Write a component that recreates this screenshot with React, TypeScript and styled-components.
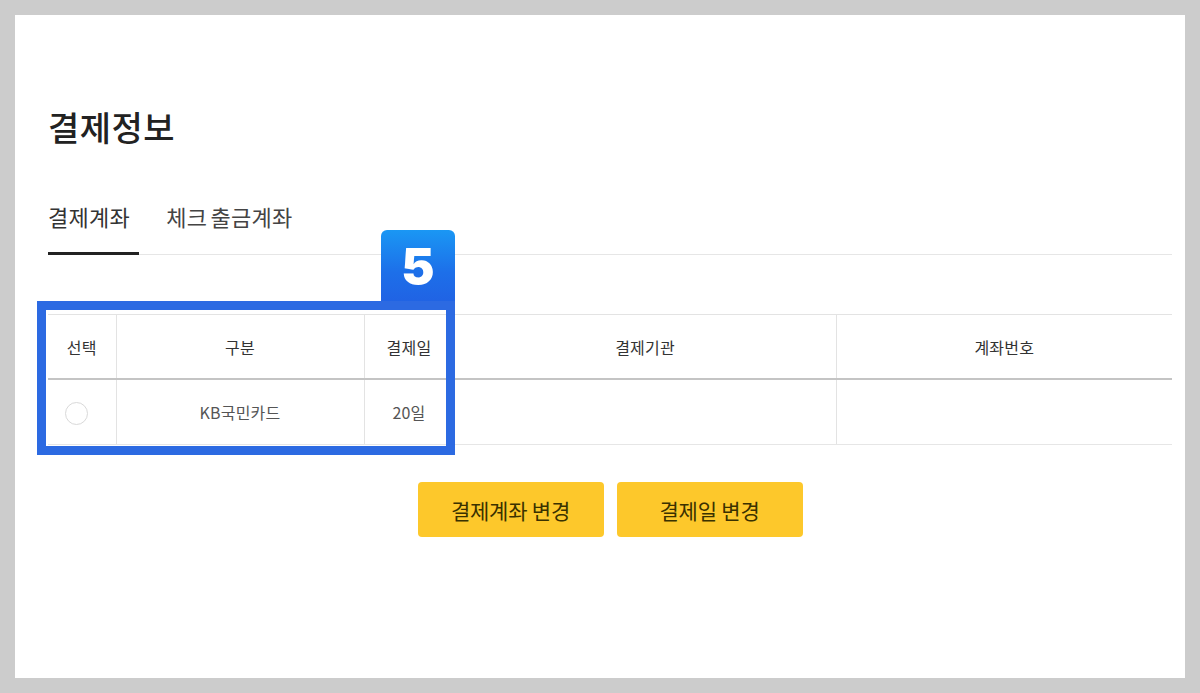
import React from 'react';
import styled, { createGlobalStyle } from 'styled-components';

const GlobalStyle = createGlobalStyle`
  html, body {
    margin: 0;
    padding: 0;
    background: #cccccc;
  }
  body {
    font-family: 'Noto Sans CJK KR', 'Noto Sans', sans-serif;
    color: #222;
  }
`;

// 결제정보 화면
const columns = [
  { key: 'select', label: '선택', width: 68 },
  { key: 'type', label: '구분', width: 248 },
  { key: 'day', label: '결제일', width: 90 },
  { key: 'org', label: '결제기관', width: 382 },
  { key: 'account', label: '계좌번호', width: 336 },
];

const rows = [{ id: 1, type: 'KB국민카드', day: '20일', org: '', account: '' }];

const Frame = styled.div`
  box-sizing: border-box;
  width: 1200px;
  height: 693px;
  padding: 15px;
  background: #cccccc;
`;

const Panel = styled.main`
  box-sizing: border-box;
  height: 100%;
  background: #ffffff;
  padding: 90px 13px 0 33px;
  display: flex;
  flex-direction: column;
`;

const Title = styled.h1`
  margin: 0;
  font-size: 34px;
  line-height: 44px;
  font-weight: 500;
  letter-spacing: 0.5px;
  color: #222;
`;

const TabBar = styled.ul`
  list-style: none;
  margin: 55px 0 0;
  padding: 0;
  display: flex;
  gap: 27px;
  border-bottom: 1px solid #e6e6e6;
`;

const Tab = styled.li<{ $active?: boolean }>`
  padding: 0 9px 24px 0;
  margin-bottom: -1px;
  font-size: 22px;
  line-height: 24px;
  letter-spacing: 0.3px;
  word-spacing: -2px;
  color: ${(p) => (p.$active ? '#333' : '#444')};
  border-bottom: 3px solid ${(p) => (p.$active ? '#222' : 'transparent')};
`;

const TableWrap = styled.div`
  position: relative;
  margin-top: 59px;
`;

const Table = styled.table`
  width: 100%;
  border-collapse: collapse;
  table-layout: fixed;
  border-top: 1px solid #e3e3e3;
  font-size: 16px;
  letter-spacing: 0.2px;
`;

const Th = styled.th`
  height: 63px;
  padding: 0;
  font-weight: 400;
  color: #333;
  border-bottom: 2px solid #c4c4c4;
  border-left: 1px solid #e3e3e3;
  &:first-child {
    border-left: none;
  }
`;

const Td = styled.td`
  height: 64px;
  padding: 0;
  text-align: center;
  color: #555;
  border-bottom: 1px solid #e6e6e6;
  border-left: 1px solid #e3e3e3;
  &:first-child {
    border-left: none;
  }
`;

const Radio = styled.span`
  display: inline-block;
  box-sizing: border-box;
  width: 23px;
  height: 23px;
  margin-right: 10px;
  border: 1px solid #d9d9d9;
  border-radius: 50%;
  vertical-align: middle;
`;

// 설명용 강조 박스 (스크린샷 위 주석)
const Highlight = styled.div`
  position: absolute;
  left: -11px;
  top: -13px;
  width: 418px;
  height: 154px;
  box-sizing: border-box;
  border: 9px solid #2c6ae2;
  pointer-events: none;
`;

const Badge = styled.div`
  position: absolute;
  right: -9px;
  bottom: 100%;
  margin-bottom: 9px;
  width: 74px;
  height: 71px;
  border-radius: 6px 6px 0 0;
  background: linear-gradient(180deg, #1a97f4 0%, #1d6fe9 60%, #2063e4 100%);
  display: flex;
  align-items: center;
  justify-content: center;
  color: #ffffff;
  font-family: Inter, 'DejaVu Sans', sans-serif;
  font-weight: 900;
  font-size: 50px;
  line-height: 1;
`;

const ButtonRow = styled.div`
  display: flex;
  justify-content: center;
  gap: 13px;
  margin-top: 37px;
`;

const Button = styled.button`
  width: 186px;
  height: 55px;
  border: none;
  border-radius: 4px;
  background: #fdc82b;
  font-family: 'Noto Sans CJK KR', 'Noto Sans', sans-serif;
  font-size: 21px;
  letter-spacing: -0.2px;
  color: #3a3100;
  cursor: pointer;
`;

const App = () => {
  return (
    <>
      <GlobalStyle />
      <Frame>
        <Panel>
          <Title>결제정보</Title>
          <TabBar>
            <Tab $active>결제계좌</Tab>
            <Tab>체크 출금계좌</Tab>
          </TabBar>

          <TableWrap>
            <Table>
              <colgroup>
                {columns.map((c) => (
                  <col key={c.key} style={{ width: c.width }} />
                ))}
              </colgroup>
              <thead>
                <tr>
                  {columns.map((c) => (
                    <Th key={c.key}>{c.label}</Th>
                  ))}
                </tr>
              </thead>
              <tbody>
                {rows.map((r) => (
                  <tr key={r.id}>
                    <Td>
                      <Radio />
                    </Td>
                    <Td>{r.type}</Td>
                    <Td>{r.day}</Td>
                    <Td>{r.org}</Td>
                    <Td>{r.account}</Td>
                  </tr>
                ))}
              </tbody>
            </Table>
            <Highlight>
              <Badge>5</Badge>
            </Highlight>
          </TableWrap>

          <ButtonRow>
            <Button>결제계좌 변경</Button>
            <Button>결제일 변경</Button>
          </ButtonRow>
        </Panel>
      </Frame>
    </>
  );
};

export default App;
